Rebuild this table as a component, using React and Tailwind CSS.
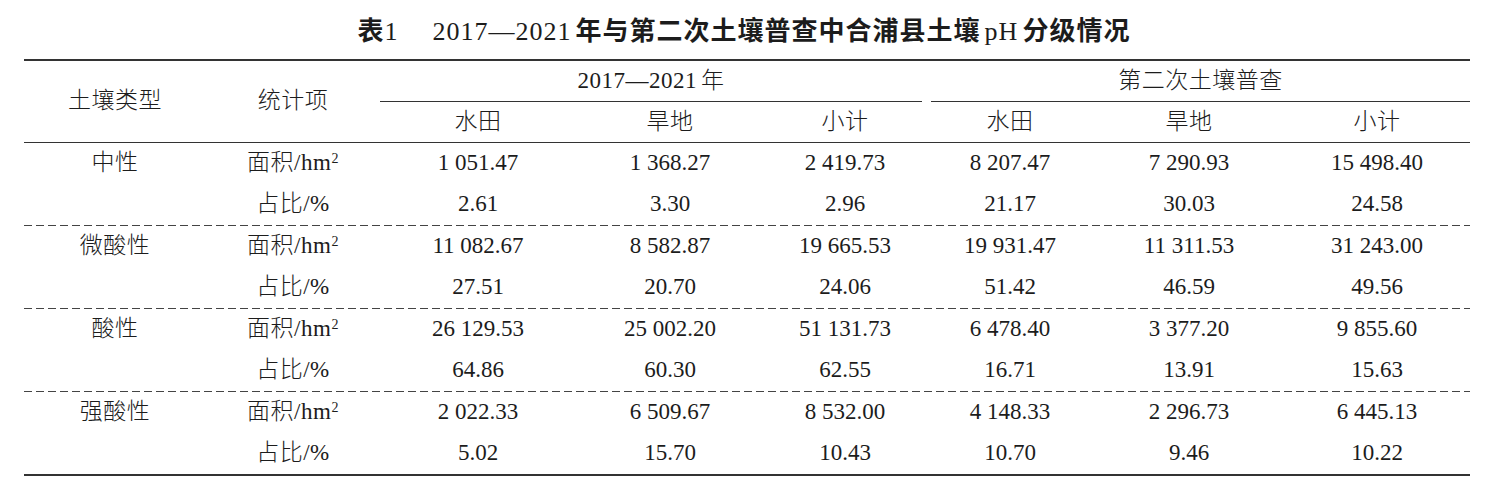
import React from "react";

const COLS = "grid grid-cols-[182px_174px_196px_188px_162px_168px_190px_186px]";
const FONT = "font-['Liberation_Serif','Noto_Sans_CJK_SC',serif]";

const groups = [
  {
    name: "中性",
    area: ["1 051.47", "1 368.27", "2 419.73", "8 207.47", "7 290.93", "15 498.40"],
    pct: ["2.61", "3.30", "2.96", "21.17", "30.03", "24.58"],
  },
  {
    name: "微酸性",
    area: ["11 082.67", "8 582.87", "19 665.53", "19 931.47", "11 311.53", "31 243.00"],
    pct: ["27.51", "20.70", "24.06", "51.42", "46.59", "49.56"],
  },
  {
    name: "酸性",
    area: ["26 129.53", "25 002.20", "51 131.73", "6 478.40", "3 377.20", "9 855.60"],
    pct: ["64.86", "60.30", "62.55", "16.71", "13.91", "15.63"],
  },
  {
    name: "强酸性",
    area: ["2 022.33", "6 509.67", "8 532.00", "4 148.33", "2 296.73", "6 445.13"],
    pct: ["5.02", "15.70", "10.43", "10.70", "9.46", "10.22"],
  },
];

function Cell({ children, className = "" }) {
  return (
    <div className={`h-[41px] flex items-center justify-center whitespace-nowrap ${className}`}>
      {children}
    </div>
  );
}

const Area = () => (
  <span>
    面积/hm<span className="text-[14px] relative -top-[7px]">2</span>
  </span>
);

export default function App() {
  return (
    <div className={`w-[1488px] h-[484px] bg-white text-[#1c1c1c] font-light ${FONT}`}>
      <div className="h-[59px] pt-[17px] text-center text-[26px] leading-[30px] font-bold tracking-[1px] whitespace-nowrap">
        表<span className="font-normal">1</span>
        <span className="inline-block w-[34px]"></span>
        <span className="font-normal">2017—2021</span>
        <span className="inline-block w-[4px]"></span>年与第二次土壤普查中合浦县土壤
        <span className="inline-block w-[4px]"></span>
        <span className="font-normal">pH</span>
        <span className="inline-block w-[4px]"></span>分级情况
      </div>

      <div className="ml-[24px] w-[1446px] border-t-2 border-b-2 border-[#333] text-[23px] tracking-[0.5px]">
        {/* header */}
        <div className={`${COLS} border-b border-[#333]`}>
          <div className="row-span-2 flex items-center justify-center">土壤类型</div>
          <div className="row-span-2 flex items-center justify-center">统计项</div>
          <div className="col-span-3 h-[41px] pr-[4px]">
            <div className="h-full border-b border-[#333] flex items-center justify-center">
              2017—2021<span className="inline-block w-[4px]"></span>年
            </div>
          </div>
          <div className="col-span-3 h-[41px] pl-[5px]">
            <div className="h-full border-b border-[#333] flex items-center justify-center">第二次土壤普查</div>
          </div>
          <div className="h-[40px] flex items-center justify-center">水田</div>
          <div className="h-[40px] flex items-center justify-center">旱地</div>
          <div className="h-[40px] flex items-center justify-center">小计</div>
          <div className="h-[40px] flex items-center justify-center">水田</div>
          <div className="h-[40px] flex items-center justify-center">旱地</div>
          <div className="h-[40px] flex items-center justify-center">小计</div>
        </div>

        {groups.map((g, gi) => (
          <div key={g.name}>
            <div className={COLS}>
              <Cell>{g.name}</Cell>
              <Cell><Area /></Cell>
              {g.area.map((v, i) => (
                <Cell key={i} className="tracking-normal">{v}</Cell>
              ))}
              <Cell></Cell>
              <Cell>占比/%</Cell>
              {g.pct.map((v, i) => (
                <Cell key={i} className="tracking-normal">{v}</Cell>
              ))}
            </div>
            {gi < groups.length - 1 && (
              <div className="h-[1px] bg-[linear-gradient(to_right,#444_8px,transparent_8px)] bg-[length:12px_1px]"></div>
            )}
          </div>
        ))}
      </div>
    </div>
  );
}
